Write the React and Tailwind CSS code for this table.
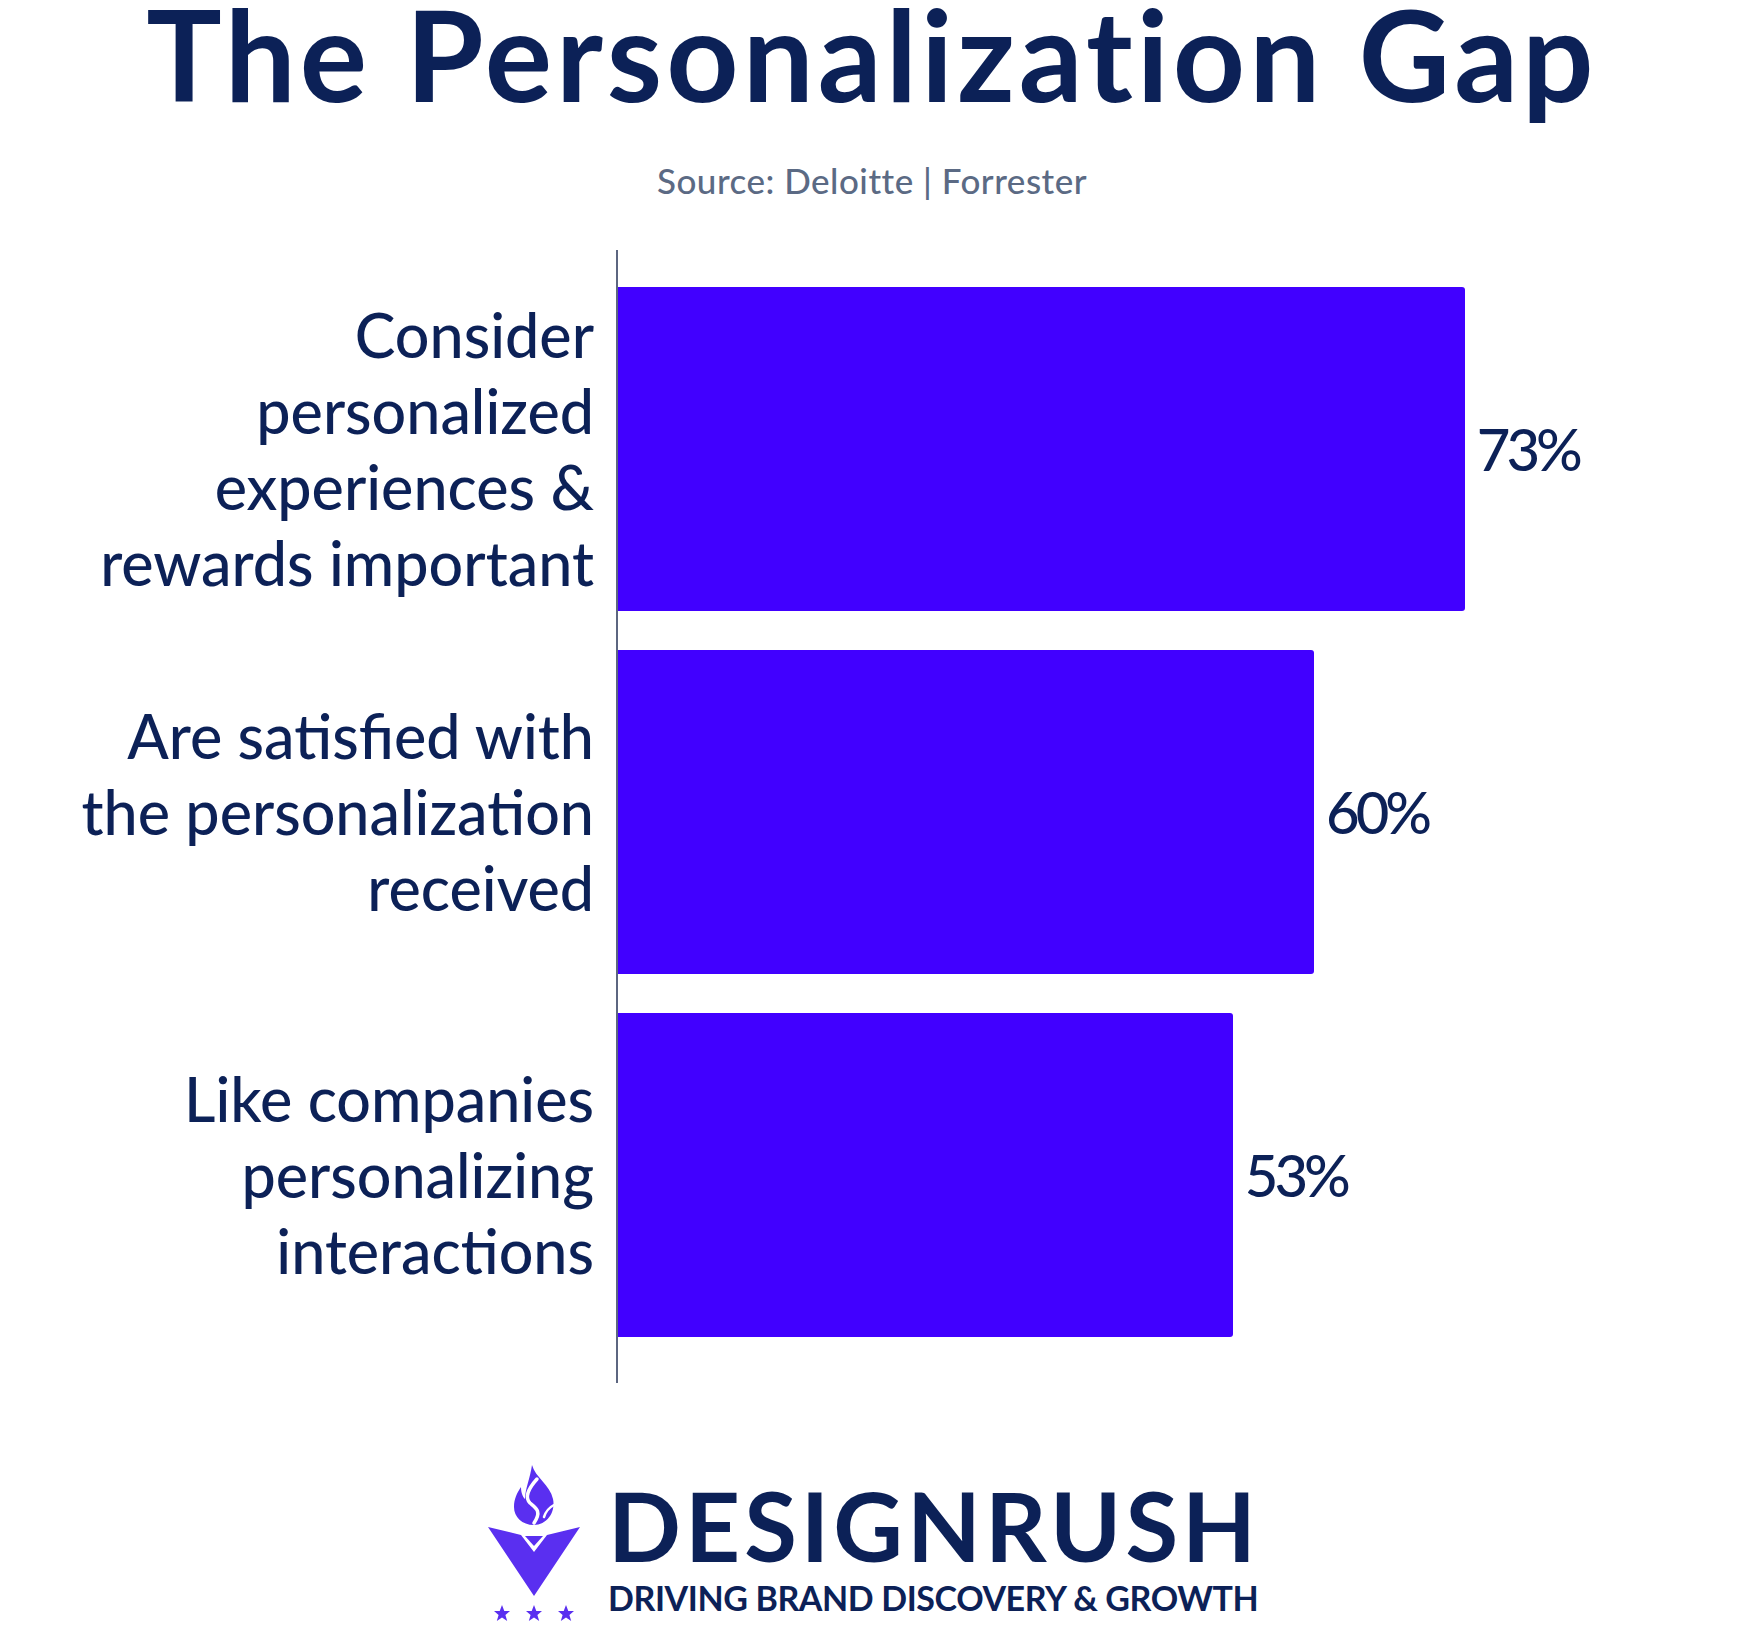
import React from "react";

const rows = [
  { lines: ["Consider", "personalized", "experiences &", "rewards important"], value: 73 },
  { lines: ["Are satisfied with", "the personalization", "received"], value: 60 },
  { lines: ["Like companies", "personalizing", "interactions"], value: 53 },
];

const Logo = () => (
  <svg width="100" height="170" viewBox="14 10 100 170" className="shrink-0">
    <path
      d="M62 16 C65 28 80 36 83 50 C86 64 76 76 64 76 C52 76 44 68 44 58 C44 50 47 44 51 38 C51 44 53 48 55 50 C55 40 60 30 62 16 Z"
      fill="#5a2ff0"
    />
    <path d="M67 30 C58 40 54 48 60 54 C66 59 72 62 64 74" fill="none" stroke="#fff" strokeWidth="3.5" strokeLinecap="round" />
    <path d="M84 56 C80 58 76 62 74 68" fill="none" stroke="#fff" strokeWidth="2.5" strokeLinecap="round" />
    <path d="M18 78 L51 86 L64 103 L77 86 L110 78 L64 147 Z" fill="#5a2ff0" />
    <path d="M55 87 L73 87 L64 97 Z" fill="#5a2ff0" />
    {[32, 64, 96].map((cx) => (
      <polygon
        key={cx}
        fill="#5a2ff0"
        points={`${cx},156 ${cx + 2.3},162 ${cx + 8},162 ${cx + 3.4},166 ${cx + 5.2},172 ${cx},168.5 ${cx - 5.2},172 ${cx - 3.4},166 ${cx - 8},162 ${cx - 2.3},162`}
      />
    ))}
  </svg>
);

export default function App() {
  return (
    <div className="w-[1744px] h-[1632px] bg-white flex flex-col items-center font-['Lato','Liberation_Sans',sans-serif] text-[#0c2157]">
      <h1 className="text-[126px] font-bold leading-[108px] tracking-[4px]">The Personalization Gap</h1>
      <p className="mt-[55px] text-[35px] font-medium text-[#5b6a84] leading-none tracking-[0.5px]">Source: Deloitte | Forrester</p>

      <div className="flex w-full mt-[52px]">
        <div className="w-[616px] shrink-0 flex flex-col gap-[39px] pt-[37px] pb-[46px] pr-[22px]">
          {rows.map((r) => (
            <div key={r.value} className="h-[324px] flex flex-col justify-center items-end text-right text-[61px] font-medium leading-[76px]">
              {r.lines.map((l) => (
                <span key={l} className="whitespace-nowrap">{l}</span>
              ))}
            </div>
          ))}
        </div>
        <div className="border-l-2 border-[#5c6680] flex flex-col gap-[39px] pt-[37px] pb-[46px]">
          {rows.map((r) => (
            <div key={r.value} className="h-[324px] flex items-center">
              <div className="h-full bg-[#4100ff] rounded-r-[3px]" style={{ width: `${r.value * 11.6}px` }} />
              <span className="ml-[12px] text-[58px] font-medium leading-none tracking-[-4px]">{r.value}%</span>
            </div>
          ))}
        </div>
      </div>

      <div className="flex items-start mt-[76px]">
        <Logo />
        <div className="ml-[24px] flex flex-col pt-[18px]">
          <span className="text-[96px] font-bold leading-none tracking-[4px] text-[#0c2157]">DESIGNRUSH</span>
          <span className="text-[34px] font-bold leading-none mt-[8px] tracking-[-0.4px] text-[#0c2157]">DRIVING BRAND DISCOVERY &amp; GROWTH</span>
        </div>
      </div>
    </div>
  );
}
